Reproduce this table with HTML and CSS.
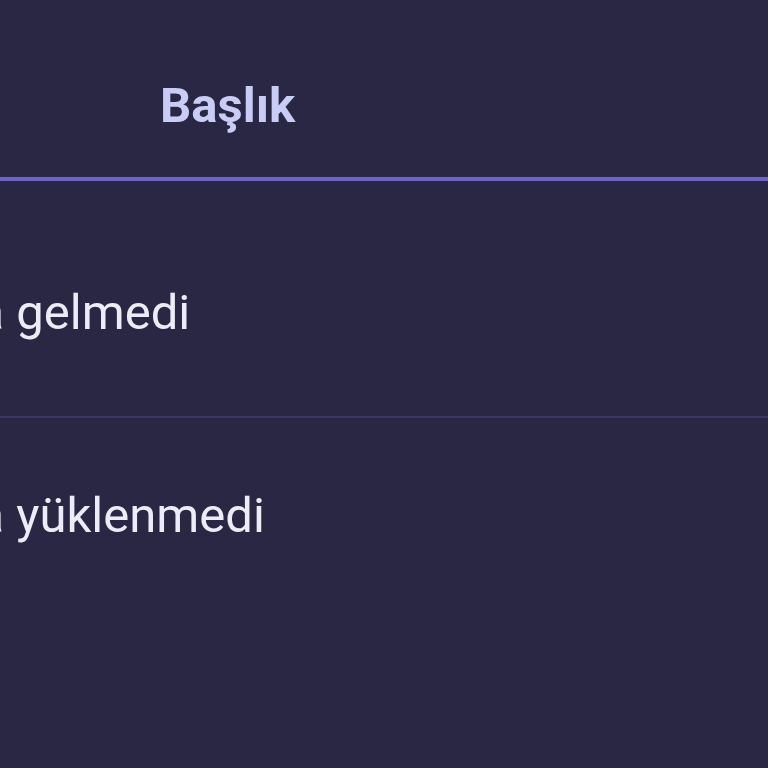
FILE: index.html
```html
<!DOCTYPE html>
<html lang="tr">
<head>
  <meta charset="UTF-8">
  <meta name="viewport" content="width=device-width, initial-scale=1.0">
  <title>Durum tablosu</title>
  <link rel="stylesheet" href="styles.css">
</head>
<body>
  <main class="table-wrap">
    <table class="status-table">
      <thead>
        <tr>
          <th>Başlık</th>
        </tr>
      </thead>
      <tbody>
        <tr>
          <td>Zamanında gelmedi</td>
        </tr>
        <tr>
          <td>Zamanında yüklenmedi</td>
        </tr>
      </tbody>
    </table>
  </main>
</body>
</html>
```

FILE: styles.css
```css
* {
  box-sizing: border-box;
}

html, body {
  height: 100%;
}

body {
  margin: 0;
  background-color: #2a2744;
  font-family: Roboto, "Noto Sans", sans-serif;
  overflow: hidden;
}

.table-wrap {
  margin-left: -262px;
}

.status-table {
  width: 1030px;
  border-collapse: collapse;
}

.status-table th {
  text-align: left;
  font-size: 49px;
  font-weight: 700;
  color: #c9cdf6;
  padding: 77px 0 43px 422px;
  border-bottom: 4px solid #6c62c8;
}

.status-table td {
  font-size: 49px;
  color: #ececf6;
  padding: 69px 0 75px 20px;
}

.status-table tbody tr:first-child td {
  padding-top: 103px;
  border-bottom: 2px solid #3b3760;
}
```
